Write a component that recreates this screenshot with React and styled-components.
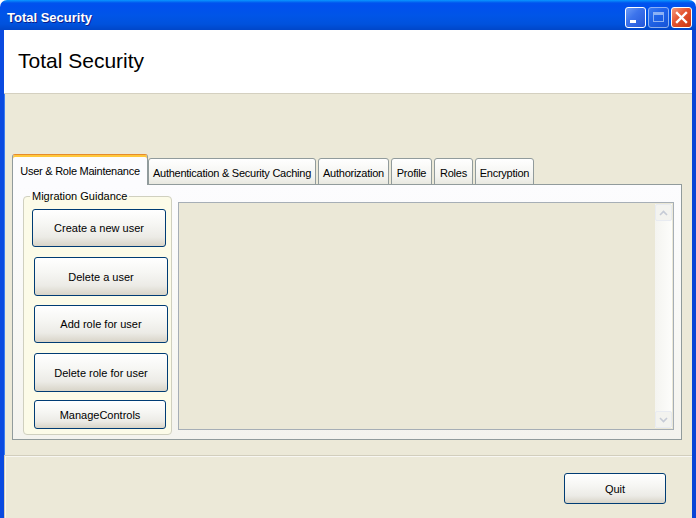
import React from 'react'
import styled, { createGlobalStyle } from 'styled-components'

const GlobalStyle = createGlobalStyle`
  html, body { margin: 0; padding: 0; background: #ffffff; }
  body { width: 696px; height: 518px; overflow: hidden; font-family: "Liberation Sans", Arial, sans-serif; }
`

const tabs = [
    { label: 'User & Role Maintenance', w: 136, active: true },
    { label: 'Authentication & Security Caching', w: 168 },
    { label: 'Authorization', w: 71 },
    { label: 'Profile', w: 41 },
    { label: 'Roles', w: 39 },
    { label: 'Encryption', w: 59 },
]

const actions = [
    { label: 'Create a new user', w: 134, h: 38, ml: 8, mt: 12 },
    { label: 'Delete a user', w: 134, h: 39, ml: 10, mt: 10 },
    { label: 'Add role for user', w: 134, h: 38, ml: 10, mt: 9 },
    { label: 'Delete role for user', w: 134, h: 39, ml: 10, mt: 10 },
    { label: 'ManageControls', w: 132, h: 29, ml: 10, mt: 8 },
]

const App = () => {
    return (
        <Window>
            <GlobalStyle />
            <TitleBar>
                <TitleText>Total Security</TitleText>
                <Controls>
                    <CtrlButton>
                        <MinGlyph />
                    </CtrlButton>
                    <CtrlButton $disabled>
                        <MaxGlyph />
                    </CtrlButton>
                    <CloseButton>
                        <svg width="13" height="13" viewBox="0 0 13 13">
                            <path d="M2 2 L11 11 M11 2 L2 11" stroke="#fff" strokeWidth="2.4" strokeLinecap="square" />
                        </svg>
                    </CloseButton>
                </Controls>
            </TitleBar>
            <Frame>
                <Header>
                    <HeaderTitle>Total Security</HeaderTitle>
                </Header>
                <Body>
                    <TabStrip>
                        {tabs.map((t) => (
                            <Tab key={t.label} $w={t.w} $active={t.active}>
                                {t.label}
                            </Tab>
                        ))}
                    </TabStrip>
                    <TabPage>
                        <GroupBox>
                            <GroupLabel>Migration Guidance</GroupLabel>
                            {actions.map((a) => (
                                <Button key={a.label} $w={a.w} $h={a.h} $ml={a.ml} $mt={a.mt}>
                                    {a.label}
                                </Button>
                            ))}
                        </GroupBox>
                        <TextBox>
                            <ScrollBar>
                                <ScrollArrow>
                                    <svg width="9" height="6" viewBox="0 0 9 6">
                                        <path d="M1 5 L4.5 1.5 L8 5" stroke="#c6cbd6" strokeWidth="1.6" fill="none" />
                                    </svg>
                                </ScrollArrow>
                                <ScrollArrow>
                                    <svg width="9" height="6" viewBox="0 0 9 6">
                                        <path d="M1 1 L4.5 4.5 L8 1" stroke="#c6cbd6" strokeWidth="1.6" fill="none" />
                                    </svg>
                                </ScrollArrow>
                            </ScrollBar>
                        </TextBox>
                    </TabPage>
                </Body>
                <Footer>
                    <Button $w={102} $h={31} $ml={0} $mt={0}>Quit</Button>
                </Footer>
            </Frame>
        </Window>
    )
}

export default App

const Window = styled.div`
    width: 696px;
    height: 518px;
    display: flex;
    flex-direction: column;
    overflow: hidden;
`
const TitleBar = styled.div`
    height: 30px;
    flex: none;
    display: flex;
    align-items: center;
    justify-content: space-between;
    padding: 2px 4px 0 7px;
    border-radius: 7px 7px 0 0;
    background: linear-gradient(180deg, #0997ff 0%, #0053ee 10%, #0050ee 20%, #0055e8 50%, #0052dd 80%, #0046c8 100%);
    box-sizing: border-box;
`
const TitleText = styled.div`
    color: #ffffff;
    font-family: "Liberation Sans", Arial, sans-serif;
    font-weight: bold;
    font-size: 13px;
    text-shadow: 1px 1px 0 #0a1e8c;
    padding-top: 3px;
`
const Controls = styled.div`
    display: flex;
    gap: 2px;
    margin-top: 2px;
`
const CtrlButton = styled.div`
    width: 21px;
    height: 21px;
    box-sizing: border-box;
    border: 1px solid #ffffff;
    border-radius: 3px;
    background: linear-gradient(135deg, #6c9cf6 0%, #3d74ec 40%, #2457d8 100%);
    display: flex;
    align-items: center;
    justify-content: center;
    opacity: ${(p) => (p.$disabled ? 0.55 : 1)};
`
const MinGlyph = styled.div`
    width: 6px;
    height: 3px;
    background: #ffffff;
    margin: 9px 6px 0 0;
`
const MaxGlyph = styled.div`
    width: 11px;
    height: 10px;
    box-sizing: border-box;
    border: 1px solid #ffffff;
    border-top-width: 3px;
`
const CloseButton = styled(CtrlButton)`
    background: linear-gradient(135deg, #f59a7e 0%, #e4532f 45%, #c93512 100%);
`
const Frame = styled.div`
    flex: 1;
    display: flex;
    flex-direction: column;
    background: #ece9d8;
    border-left: 4px solid #0a4ae0;
    border-right: 4px solid #0a45d6;
    box-shadow: inset 1px 0 0 #3b7df0;
`
const Header = styled.div`
    height: 64px;
    flex: none;
    background: #ffffff;
    border-bottom: 1px solid #d4d0c0;
    box-sizing: border-box;
    padding: 19px 0 0 14px;
`
const HeaderTitle = styled.div`
    font-family: "Liberation Sans", Arial, sans-serif;
    font-size: 21px;
    color: #000000;
`
const Body = styled.div`
    padding: 61px 0 0 8px;
    flex: none;
`
const TabStrip = styled.div`
    display: flex;
    align-items: flex-end;
    height: 30px;
    position: relative;
    z-index: 1;
`
const Tab = styled.div`
    flex: none;
    width: ${(p) => p.$w}px;
    height: ${(p) => (p.$active ? 31 : 27)}px;
    box-sizing: border-box;
    margin-right: ${(p) => (p.$active ? 0 : 2)}px;
    display: flex;
    align-items: center;
    justify-content: center;
    overflow: hidden;
    font-size: 11px;
    letter-spacing: -0.25px;
    color: #000000;
    white-space: nowrap;
    border: 1px solid #919b9c;
    border-top-color: ${(p) => (p.$active ? '#e68b2c' : '#919b9c')};
    border-bottom: ${(p) => (p.$active ? 'none' : '1px solid #919b9c')};
    border-radius: 3px 3px 0 0;
    background: ${(p) => (p.$active ? '#fcfcfe' : 'linear-gradient(180deg, #ffffff 0%, #f3f3ef 70%, #e8e8e0 100%)')};
    box-shadow: ${(p) => (p.$active ? 'inset 0 2px 0 #ffc83c' : 'none')};
    padding-top: 2px;
`
const TabPage = styled.div`
    width: 670px;
    height: 256px;
    box-sizing: border-box;
    border: 1px solid #919b9c;
    background: linear-gradient(180deg, #fcfcfe 0%, #f8f8f5 60%, #f4f3ee 100%);
    display: flex;
    align-items: flex-start;
    padding: 11px 0 0 10px;
    margin-top: -1px;
`
const GroupBox = styled.div`
    position: relative;
    width: 149px;
    height: 239px;
    box-sizing: border-box;
    border: 1px solid #d0d0bf;
    border-radius: 4px;
    background: #fcfbe8;
    display: flex;
    flex-direction: column;
`
const GroupLabel = styled.div`
    position: absolute;
    top: -7px;
    left: 6px;
    padding: 0 2px;
    font-size: 11px;
    line-height: 13px;
    color: #000000;
    background: linear-gradient(180deg, #fbfbfd 50%, #fcfbe8 50%);
`
const Button = styled.div`
    width: ${(p) => p.$w}px;
    height: ${(p) => p.$h}px;
    margin-left: ${(p) => p.$ml}px;
    margin-top: ${(p) => p.$mt}px;
    box-sizing: border-box;
    border: 1px solid #003c74;
    border-radius: 3px;
    background: linear-gradient(180deg, #ffffff 0%, #f6f6f3 40%, #ecebe6 75%, #d8d4c8 100%);
    display: flex;
    align-items: center;
    justify-content: center;
    font-size: 11px;
    color: #000000;
    flex: none;
`
const TextBox = styled.div`
    width: 496px;
    height: 228px;
    margin: 6px 0 0 6px;
    box-sizing: border-box;
    border: 1px solid #a6aeb6;
    background: #ebe8d7;
    display: flex;
    justify-content: flex-end;
    padding: 1px;
`
const ScrollBar = styled.div`
    width: 17px;
    height: 100%;
    background: linear-gradient(90deg, #f4f4f0 0%, #fdfdfb 100%);
    display: flex;
    flex-direction: column;
    justify-content: space-between;
`
const ScrollArrow = styled.div`
    width: 17px;
    height: 17px;
    box-sizing: border-box;
    border: 1px solid #e8ebf1;
    border-radius: 2px;
    background: #f3f3ef;
    display: flex;
    align-items: center;
    justify-content: center;
`
const Footer = styled.div`
    flex: 1;
    margin-top: 15px;
    border-top: 1px solid #d2cebd;
    border-left: 1px solid #d2cebd;
    box-shadow: inset 1px 1px 0 #f8f7f2;
    display: flex;
    justify-content: flex-end;
    align-items: flex-start;
    padding: 17px 26px 0 0;
`
